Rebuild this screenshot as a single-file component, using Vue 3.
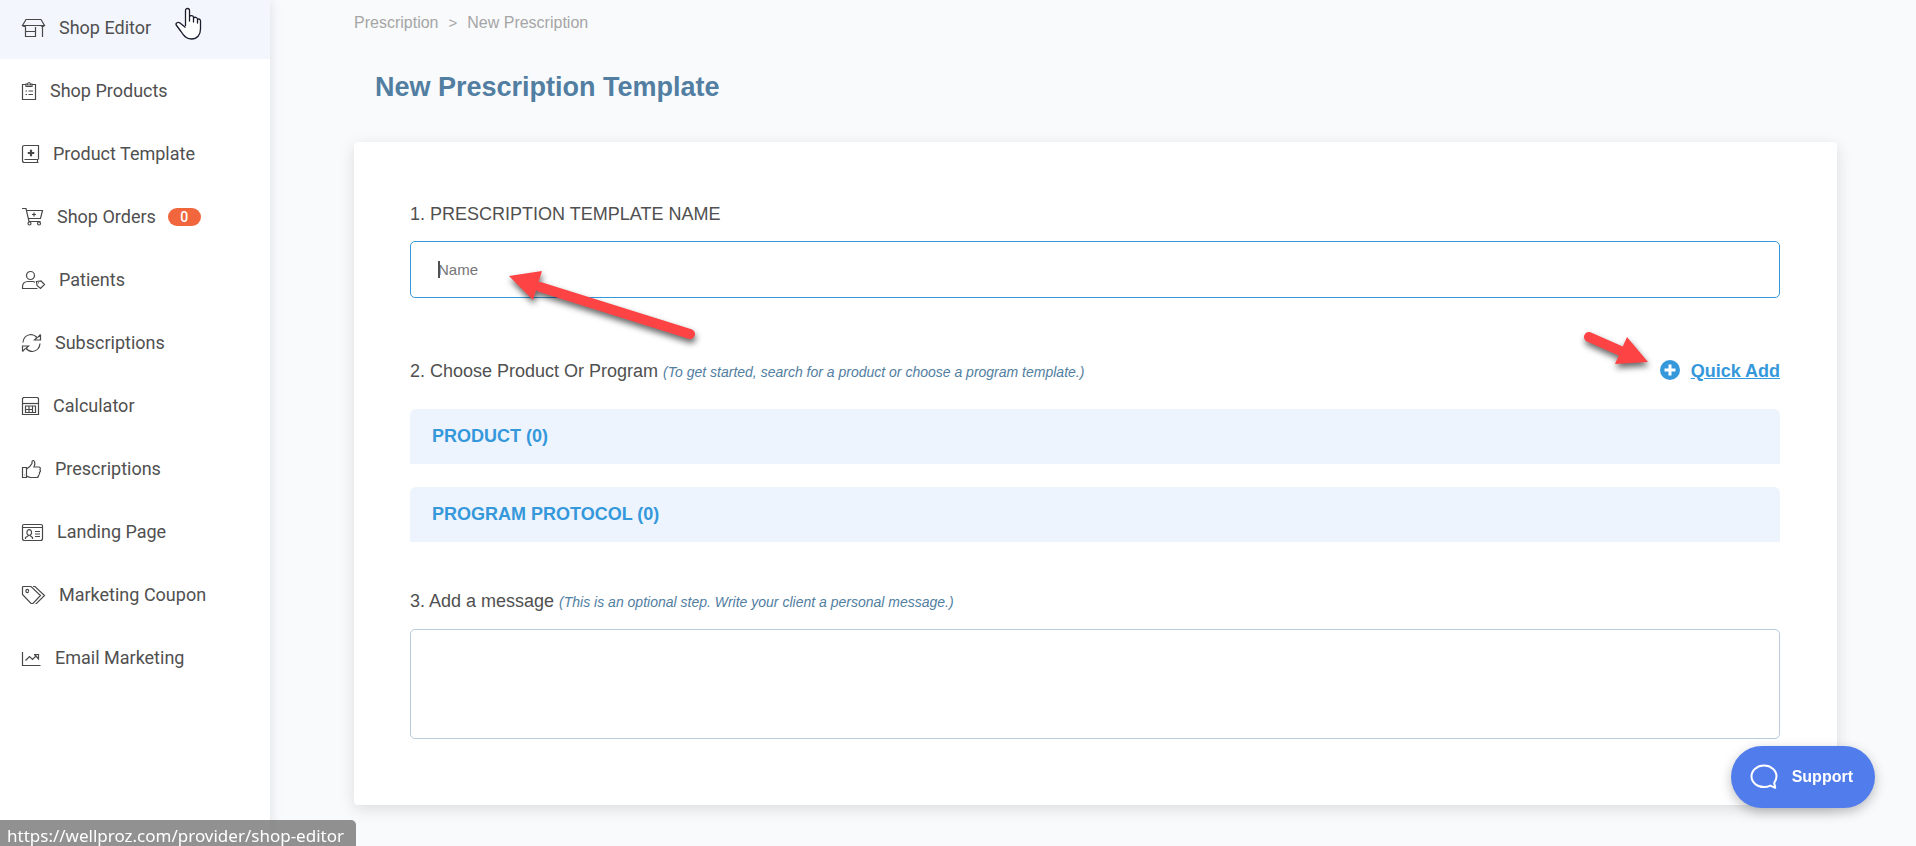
<template>
    <div class="layout">
        <aside class="sidebar">
            <nav>
                <ul class="menu">
                    <li v-for="item in menu" :key="item.label">
                        <a href="#" class="menu-link" :class="{ active: item.active }">
                            <svg class="menu-icon" :width="item.width" height="18" :viewBox="`0 0 ${item.width} 18`" aria-hidden="true">
                                <path v-for="d in item.paths" :key="d" :d="d" />
                            </svg>
                            <span>{{ item.label }}</span>
                            <span v-if="item.badge !== undefined" class="menu-badge">{{ item.badge }}</span>
                        </a>
                    </li>
                </ul>
            </nav>
        </aside>

        <main class="content">
            <nav class="breadcrumb" aria-label="Breadcrumb">
                <a href="#">Prescription</a>
                <span class="separator">&gt;</span>
                <span>New Prescription</span>
            </nav>
            <h1 class="title">New Prescription Template</h1>

            <form class="card" @submit.prevent>
                <div class="name-field">
                    <label class="label" for="template-name">1. PRESCRIPTION TEMPLATE NAME</label>
                    <div class="input-wrap">
                        <input id="template-name" v-model="name" type="text" placeholder="Name" />
                        <span class="caret"></span>
                        <svg class="arrow arrow-name" width="200" height="84" viewBox="0 0 200 84" aria-hidden="true">
                            <path d="M40 26L190 73" />
                            <polygon points="9,15 42,10 33,39" />
                        </svg>
                    </div>
                </div>

                <div class="choose">
                    <div class="choose-head">
                        <p class="label">2. Choose Product Or Program <em>(To get started, search for a product or choose a program template.)</em></p>
                        <a href="#" class="quick-add">
                            <svg width="20" height="20" viewBox="0 0 20 20" aria-hidden="true">
                                <circle cx="10" cy="9" r="10" fill="#3498db" />
                                <path d="M10 3.5V14.500M4.500 9H15.500" stroke="#fff" stroke-width="3" />
                            </svg>
                            <span>Quick Add</span>
                        </a>
                        <svg class="arrow arrow-add" width="80" height="54" viewBox="0 0 80 54" aria-hidden="true">
                            <path d="M9 11L43 26" />
                            <polygon points="68,36 47,11 35,38" />
                        </svg>
                    </div>
                    <button type="button" class="panel">PRODUCT ({{ products.length }})</button>
                    <button type="button" class="panel">PROGRAM PROTOCOL ({{ protocols.length }})</button>
                </div>

                <div class="message-field">
                    <label class="label" for="message">3. Add a message <em>(This is an optional step. Write your client a personal message.)</em></label>
                    <textarea id="message" v-model="message"></textarea>
                </div>
            </form>
        </main>

        <button type="button" class="support">
            <svg width="28" height="26" viewBox="0 0 28 26" aria-hidden="true">
                <path d="M14 1.500C7 1.500 1.500 6.300 1.500 12.300S7 23 14 23C16.500 23 18.500 22.500 20.300 21.600L25.200 23.800L24.200 18.800C25.700 17 26.500 14.800 26.500 12.300C26.500 6.300 21 1.500 14 1.500Z" />
            </svg>
            <span>Support</span>
        </button>

        <div class="status-url">https://wellproz.com/provider/shop-editor</div>

        <svg class="pointer" width="27" height="34" viewBox="0 0 27 34" aria-hidden="true">
            <path d="M10.500 19V3.500C10.500 .8 14.500 .8 14.500 3.500V14V9.500C15 8.300 18 8.300 18.500 10V15V11C19.500 9.800 22 10 22.500 11.800V16V12.500C23.500 11.500 25.500 12 25.500 14V22C25.500 28 22 32 16.500 32C11 32 8.500 28.500 6 24.500L1.200 18C.3 16 3 14.700 5 16L10.500 20.500" />
        </svg>
    </div>
</template>

<script setup>
import { ref } from 'vue';

const name = ref('');
const message = ref('');
const products = ref([]);
const protocols = ref([]);

const menu = [
    {
        label: 'Shop Editor',
        width: 23,
        active: true,
        paths: ['M4 .5H19L22.500 6.500H.5Z', 'M.5 6.500Q2 8.500 4 6.500M19 6.500Q21 8.500 22.500 6.500', 'M3.500 8V17.500H13.500V8M3.500 12.500H13.500M20.500 8V18'],
    },
    {
        label: 'Shop Products',
        width: 14,
        paths: ['M4 2.500H.5V17.500H13.500V2.500H10', 'M4 4.500V2H5.500Q7-1 8.500 2H10V4.500ZM5 3H9', 'M3.500 9H5M6.500 9H11M3.500 12.500H5M6.500 12.500H11'],
    },
    {
        label: 'Product Template',
        width: 17,
        paths: ['M16.500 14.500V.5H2.500Q.5.500.5 2.500V15.500Q.5 17.500 2.500 17.500H16.500M2.500 14.500H15.500V17', 'M9 4.500V11.500M5.500 8H12.500M8.500 5V11M9.500 5V11M6 7.500H12M6 8.500H12'],
    },
    {
        label: 'Shop Orders',
        width: 21,
        badge: 0,
        paths: ['M0 .5H4L7 13.500H18.500M4.500 2.500H20.500L18.500 10.500H6.500', 'M12 4.500V8.500M10 6.500H14', 'M9 15.500A1.500 1.500 0 1 1 6 15.500A1.500 1.500 0 1 1 9 15.500M18.500 15.500A1.500 1.500 0 1 1 15.500 15.500A1.500 1.500 0 1 1 18.500 15.500'],
    },
    {
        label: 'Patients',
        width: 23,
        paths: ['M12.500 4.500A4 4 0 1 1 4.500 4.500A4 4 0 1 1 12.500 4.500', 'M13 11.200Q12 10.500 10.500 10.500H6Q.5 10.500.5 16V17.500H15.500', 'M14.500 10.500L19 10L22.500 13.500L18.500 17.500L15 14.500ZM16.200 11.800H17'],
    },
    {
        label: 'Subscriptions',
        width: 19,
        paths: ['M1 8.500Q1.500 1.500 8.500.500Q12.500.500 15.500 4', 'M18.500.5V6H12.500L15 3.500M18.500.500L15.800 3.300', 'M18 9.500Q17.500 16.500 10.500 17.500Q6.500 17.500 3.500 14', 'M.5 17.500V12H6.500L4 14.500M.5 17.500L3.200 14.700'],
    },
    {
        label: 'Calculator',
        width: 17,
        paths: ['M1.500.5H15.500L16.500 1.500V17.500H.5V1.500Z', 'M.5 6.500H16.500', 'M3.500 9H13.500V15.500H3.500ZM3.500 12.500H10.500M7 9V15.500M10.500 9V15.500'],
    },
    {
        label: 'Prescriptions',
        width: 19,
        paths: ['M.5 7.500H4.500V17.500H.5ZM2.500 15H3', 'M4.500 9Q8.500 6.500 10 3.500V1.500Q11-.5 12.500 1.500Q13.500 3.500 12 7H17Q19 7.500 18 9.500Q19 11.500 17.500 12.500Q18 14.500 16.500 15.500Q16.500 17.500 14.500 17.500H9Q7 17.500 4.500 16'],
    },
    {
        label: 'Landing Page',
        width: 21,
        paths: ['M2 1.500H19Q20.500 1.500 20.500 3V15.500Q20.500 17.500 18.500 17.500H2.500Q.5 17.500.5 15.500V3Q.5 1.500 2 1.500M.5 4.500H20.500', 'M9.500 9.500A2.300 2.300 0 1 1 5 9.500A2.300 2.300 0 1 1 9.500 9.500M6 11.500V13L3.500 14.500V16M8.500 11.500V13L10.500 14.500V16', 'M13 8.500H18M13 11H18M13 13.500H18'],
    },
    {
        label: 'Marketing Coupon',
        width: 23,
        paths: ['M.5 1.500Q.5.500 1.500.500H9L18.500 9.500L11 17.500H9L.5 8.500Z', 'M6.500 5A1.300 1.300 0 1 1 4 5A1.300 1.300 0 1 1 6.500 5', 'M11 .500H13L22.500 9.500L14.500 17.500H13.500'],
    },
    {
        label: 'Email Marketing',
        width: 19,
        paths: ['M.5 3V16.500H18.500', 'M3.500 11.500L7.500 7.500L10.500 10.500L14.500 6.500M12 5.500H16.500V10L12.500 5.500'],
    },
];
</script>

<style>
body {
    background: #f9fafc;
}
</style>

<style scoped>
.layout {
    display: flex;
    min-height: 100vh;
    box-sizing: border-box;
    overflow: hidden;
    font-family: "Liberation Sans", Arial, sans-serif;
    font-size: 18px;
    color: #505050;
}

.sidebar {
    flex: 0 0 270px;
    background: #fff;
    box-shadow: 0 0 12px rgba(60, 80, 100, 0.16);
    font-family: Roboto, sans-serif;
}

.menu {
    list-style: none;
    margin: -4px 0 0;
    padding: 0;
}

.menu-link {
    display: flex;
    align-items: center;
    height: 63px;
    padding-left: 22px;
    color: #505050;
    text-decoration: none;
}

.menu-link.active {
    background: #f3f6fc;
}

.menu-icon {
    margin-right: 14px;
    overflow: visible;
    fill: none;
    stroke: #484848;
    stroke-width: 1.2;
}

.menu-badge {
    width: 33px;
    margin-left: 12px;
    border-radius: 9px;
    background: #f1663c;
    color: #fff;
    font-size: 14px;
    font-weight: 500;
    line-height: 18px;
    text-align: center;
}

.content {
    flex: 1;
    min-width: 0;
    padding: 13px 79px 40px 84px;
}

.breadcrumb {
    display: flex;
    gap: 10px;
    font-size: 16px;
    line-height: 20px;
    color: #a5a5a5;
}

.breadcrumb a {
    color: inherit;
    text-decoration: none;
}

.separator {
    font-size: 15px;
}

.title {
    margin: 38px 21px 39px;
    font-size: 27px;
    line-height: 32px;
    color: #517ea1;
}

.card {
    padding: 62px 57px 66px 56px;
    border-radius: 4px;
    background: #fff;
    box-shadow: 0 4px 16px rgba(0, 0, 0, 0.12);
}

.label {
    display: block;
    margin: 0;
    line-height: 20px;
}

.label em {
    font-size: 14px;
    color: #517ea1;
}

.input-wrap {
    position: relative;
    margin-top: 17px;
}

input,
textarea {
    display: block;
    box-sizing: border-box;
    width: 100%;
    border: 1px solid #b9cbdc;
    border-radius: 5px;
    background: #fff;
    font-family: inherit;
    font-size: 15px;
    color: #505050;
    outline: none;
}

input {
    height: 57px;
    padding: 0 27px;
    border-color: #3498db;
}

input::placeholder {
    color: #757575;
}

textarea {
    height: 110px;
    margin-top: 17px;
    padding: 16px 27px;
    resize: none;
}

.caret {
    position: absolute;
    left: 28px;
    top: 20px;
    width: 2px;
    height: 17px;
    background: #505050;
}

.arrow {
    position: absolute;
    z-index: 1;
    overflow: visible;
    fill: #fe4345;
    filter: drop-shadow(1px 4px 3px rgba(0, 0, 0, 0.6));
    pointer-events: none;
}

.arrow path {
    stroke: #fe4345;
    stroke-width: 10;
    stroke-linecap: round;
}

.arrow-name {
    left: 90px;
    top: 20px;
}

.arrow-add {
    right: 120px;
    top: -35px;
}

.choose {
    margin-top: 63px;
}

.choose-head {
    position: relative;
    display: flex;
    justify-content: space-between;
    align-items: flex-start;
    margin-bottom: 27px;
}

.quick-add {
    display: flex;
    align-items: center;
    gap: 11px;
    font-weight: bold;
    line-height: 20px;
    color: #3498db;
}

.quick-add svg {
    overflow: visible;
}

.panel {
    display: block;
    width: 100%;
    height: 55px;
    padding: 0 22px;
    border: 0;
    border-radius: 6px 6px 0 0;
    background: #edf4fd;
    font-family: inherit;
    font-size: 18px;
    font-weight: bold;
    text-align: left;
    color: #3498db;
}

.panel + .panel {
    margin-top: 23px;
}

.message-field {
    margin-top: 49px;
}

.support {
    position: fixed;
    right: 41px;
    bottom: 38px;
    z-index: 2;
    display: flex;
    align-items: center;
    gap: 14px;
    height: 62px;
    padding: 0 22px 0 19px;
    border: 0;
    border-radius: 31px;
    background: #517cec;
    box-shadow: 0 4px 12px rgba(0, 0, 0, 0.25);
    font-family: inherit;
    font-size: 16px;
    font-weight: bold;
    color: #fff;
}

.support path {
    fill: none;
    stroke: #fff;
    stroke-width: 2;
    stroke-linejoin: round;
}

.status-url {
    position: fixed;
    left: 0;
    bottom: 0;
    z-index: 3;
    padding: 6px 12px 0 7px;
    border-radius: 0 5px 0 0;
    background: rgba(118, 118, 118, 0.8);
    font-family: "Noto Sans", sans-serif;
    font-size: 17px;
    line-height: 20px;
    white-space: nowrap;
    color: #fff;
}

.pointer {
    position: fixed;
    left: 175px;
    top: 7px;
    z-index: 4;
    fill: #fff;
    stroke: #1c1c2c;
    stroke-width: 1.3;
    stroke-linejoin: round;
    pointer-events: none;
}
</style>
